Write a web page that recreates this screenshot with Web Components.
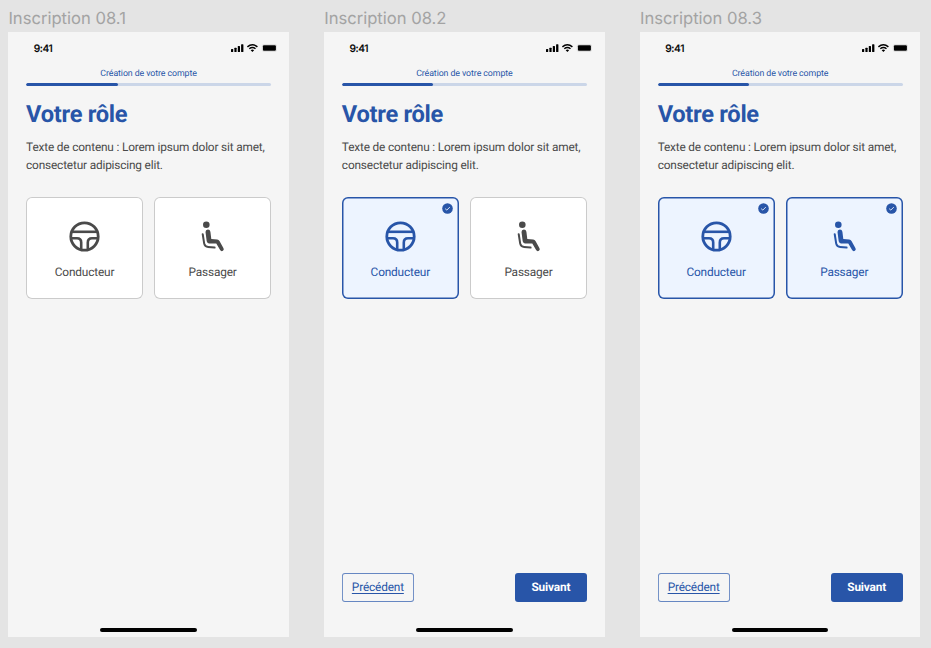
<!DOCTYPE html>
<html lang="fr">
<head>
<meta charset="utf-8">
<title>Inscription 08</title>
<style>
html, body { margin: 0; height: 100%; background: #e4e4e4; overflow: hidden; font-family: Roboto, sans-serif; text-rendering: geometricPrecision; }
</style>
</head>
<body>
<sign-up-board></sign-up-board>
<script>
const define = (name, html, setup) => {
  const template = document.createElement('template');
  template.innerHTML = html;
  customElements.define(name, class extends HTMLElement {
    constructor() {
      super();
      this.attachShadow({ mode: 'open' }).append(template.content.cloneNode(true));
    }
    connectedCallback() { if (setup) setup(this, this.shadowRoot); }
  });
};

define('status-bar', `
<style>
:host { display: flex; justify-content: space-between; align-items: center; height: 34px; padding: 0 12.2px 0 25.3px; box-sizing: border-box; color: #000; }
span { font: 500 10.3px/14px Inter, sans-serif; letter-spacing: -.4px; -webkit-text-stroke: .15px; }
svg { display: block; margin-top: -1px; }
</style>
<span>9:41</span>
<svg width="46" height="10" viewBox="0 0 46 10">
  <g fill="#000">
    <rect x="0" y="6" width="2.2" height="2.9" rx=".5"/>
    <rect x="3.4" y="4.7" width="2.2" height="4.2" rx=".5"/>
    <rect x="6.8" y="3.1" width="2.2" height="5.8" rx=".5"/>
    <rect x="10.1" y="1.3" width="2.3" height="7.6" rx=".5"/>
    <path d="M21.4 9L23.1 7.2Q21.4 5.9 19.7 7.2Z"/>
    <rect x="31.9" y="2.2" width="13" height="5.6" rx="1"/>
  </g>
  <rect x="31.2" y="1.5" width="14.4" height="7" rx="1.6" fill="none" stroke="#000" stroke-opacity=".15" stroke-width=".6"/>
  <g fill="none" stroke="#000" stroke-width="1.45">
    <path d="M16.4 3.9Q21.4 -.5 26.4 3.9"/>
    <path d="M18.3 5.8Q21.4 3.2 24.5 5.8"/>
  </g>
</svg>`);

define('step-progress', `
<style>
:host { display: block; text-align: center; color: #2855a8; }
span { display: block; font-size: 8.8px; line-height: 12px; letter-spacing: -.09px; }
div { height: 3px; margin-top: 3.7px; border-radius: 2px; background: #cbd6e8; overflow: hidden; }
i { display: block; height: 100%; width: 37.4%; border-radius: 2px; background: #2855a8; }
</style>
<span><slot></slot></span><div><i></i></div>`);

define('wheel-icon', `
<style>:host, svg { display: block; }</style>
<svg width="31" height="31" viewBox="0 0 31 31" fill="none" stroke="currentColor" stroke-width="2.8">
  <circle cx="15.5" cy="15.5" r="13.7"/>
  <path d="M2.8 10.8H28.2" stroke-width="2.6"/>
  <path d="M2 17.3H8Q12.2 17.3 12.2 21.5V28.6M29 17.3H23Q18.8 17.3 18.8 21.5V28.6" stroke-width="2.6"/>
</svg>`);

define('seat-icon', `
<style>:host, svg { display: block; }</style>
<svg width="31" height="31" viewBox="0 0 31 31" fill="none" stroke="currentColor" stroke-linecap="round" stroke-linejoin="round">
  <circle cx="9.3" cy="3.8" r="3.3" fill="currentColor" stroke="none"/>
  <path d="M5.7 13.2L7.2 22.6Q7.9 25.8 11.1 25.9L17.6 26.6" stroke-width="2"/>
  <path d="M8.5 10.9Q8.5 8.4 10.9 8.4Q13 8.4 13.4 10.8L14.3 17.9L20.2 18.4Q21.7 18.7 22.5 20.1L26.5 27.3Q27.3 29 25.9 29.8Q24.2 30.8 23.1 29.1L19.3 22.5L12 22.4Q10.1 22.2 9.7 20.2Z" fill="currentColor" stroke="none"/>
</svg>`);

define('check-badge', `
<style>
:host { display: block; position: absolute; top: 6.1px; right: 6px; }
svg { display: block; }
</style>
<svg width="11" height="11" viewBox="0 0 11 11"><circle cx="5.5" cy="5.5" r="5.3" fill="#2855a8"/><path d="M3.2 5.7L4.8 7.1L7.8 4.1" fill="none" stroke="#e2eafa" stroke-width=".95"/></svg>`);

define('role-card', `
<style>
:host { display: flex; position: relative; flex: 1; flex-direction: column; align-items: center; height: 102px; box-sizing: border-box; padding-top: 24px; border-radius: 6px; background: #fff; box-shadow: inset 0 0 0 1px #cbcbcb; color: #4a4a4a; }
:host([selected]) { background: #edf4ff; box-shadow: inset 0 0 0 1.5px #2855a8; color: #2855a8; }
check-badge { display: none; }
:host([selected]) check-badge { display: block; }
span { margin-top: 12.3px; font-size: 11.85px; line-height: 16px; letter-spacing: -.17px; }
</style>
<slot name="icon"></slot><span><slot></slot></span><check-badge></check-badge>`);

define('nav-button', `
<style>
:host { display: flex; align-items: center; justify-content: center; width: 72px; height: 29px; box-sizing: border-box; border-radius: 3px; font-size: 11.85px; letter-spacing: -.17px; background: #2855a8; color: #fff; font-weight: 700; }
:host([outline]) { background: none; box-shadow: inset 0 0 0 .9px #6687c2; color: #2855a8; font-weight: 400; }
:host([outline]) span { text-decoration: underline; text-decoration-thickness: 1px; text-underline-offset: 1.6px; text-decoration-skip-ink: none; }
</style>
<span><slot></slot></span>`);

define('phone-screen', `
<style>
:host { display: block; width: 280.4px; }
h2 { margin: 0; height: 31.5px; padding-top: 8.5px; box-sizing: border-box; font: 400 16.6px/21px Inter, sans-serif; color: #a3a3a3; white-space: nowrap; }
.frame { display: flex; flex-direction: column; height: 605.8px; background: #f5f5f5; }
main { flex: 1; display: flex; flex-direction: column; padding: 2.3px 17.7px 0; }
h1 { margin: 13.6px 0 0; font-size: 23.7px; line-height: 28px; font-weight: 700; letter-spacing: -.3px; color: #2855a8; }
p { margin: 10.9px 0 0; font-size: 11.85px; line-height: 17.6px; letter-spacing: -.17px; color: #4a4a4a; white-space: nowrap; }
.roles { display: flex; gap: 11.2px; margin-top: 22.4px; }
nav { display: flex; justify-content: space-between; margin-top: auto; padding-bottom: 26.4px; }
:host([first]) nav { display: none; }
footer { display: flex; justify-content: center; height: 9.2px; }
footer i { width: 96.4px; height: 3.7px; border-radius: 2px; background: #000; }
</style>
<h2></h2>
<div class="frame">
  <status-bar></status-bar>
  <main>
    <step-progress>Création de votre compte</step-progress>
    <h1>Votre rôle</h1>
    <p>Texte de contenu : Lorem ipsum dolor sit amet,<br>consectetur adipiscing elit.</p>
    <div class="roles">
      <role-card id="driver"><wheel-icon slot="icon"></wheel-icon>Conducteur</role-card>
      <role-card id="passenger"><seat-icon slot="icon"></seat-icon>Passager</role-card>
    </div>
    <nav><nav-button outline>Précédent</nav-button><nav-button>Suivant</nav-button></nav>
  </main>
  <footer><i></i></footer>
</div>`, (host, root) => {
  root.querySelector('h2').textContent = host.getAttribute('name');
  root.querySelector('#driver').toggleAttribute('selected', host.hasAttribute('driver'));
  root.querySelector('#passenger').toggleAttribute('selected', host.hasAttribute('passenger'));
});

define('sign-up-board', `
<style>:host { display: flex; gap: 35.4px; padding-left: 8.4px; }</style>
<phone-screen name="Inscription 08.1" first></phone-screen>
<phone-screen name="Inscription 08.2" driver></phone-screen>
<phone-screen name="Inscription 08.3" driver passenger></phone-screen>`);
</script>
</body>
</html>
